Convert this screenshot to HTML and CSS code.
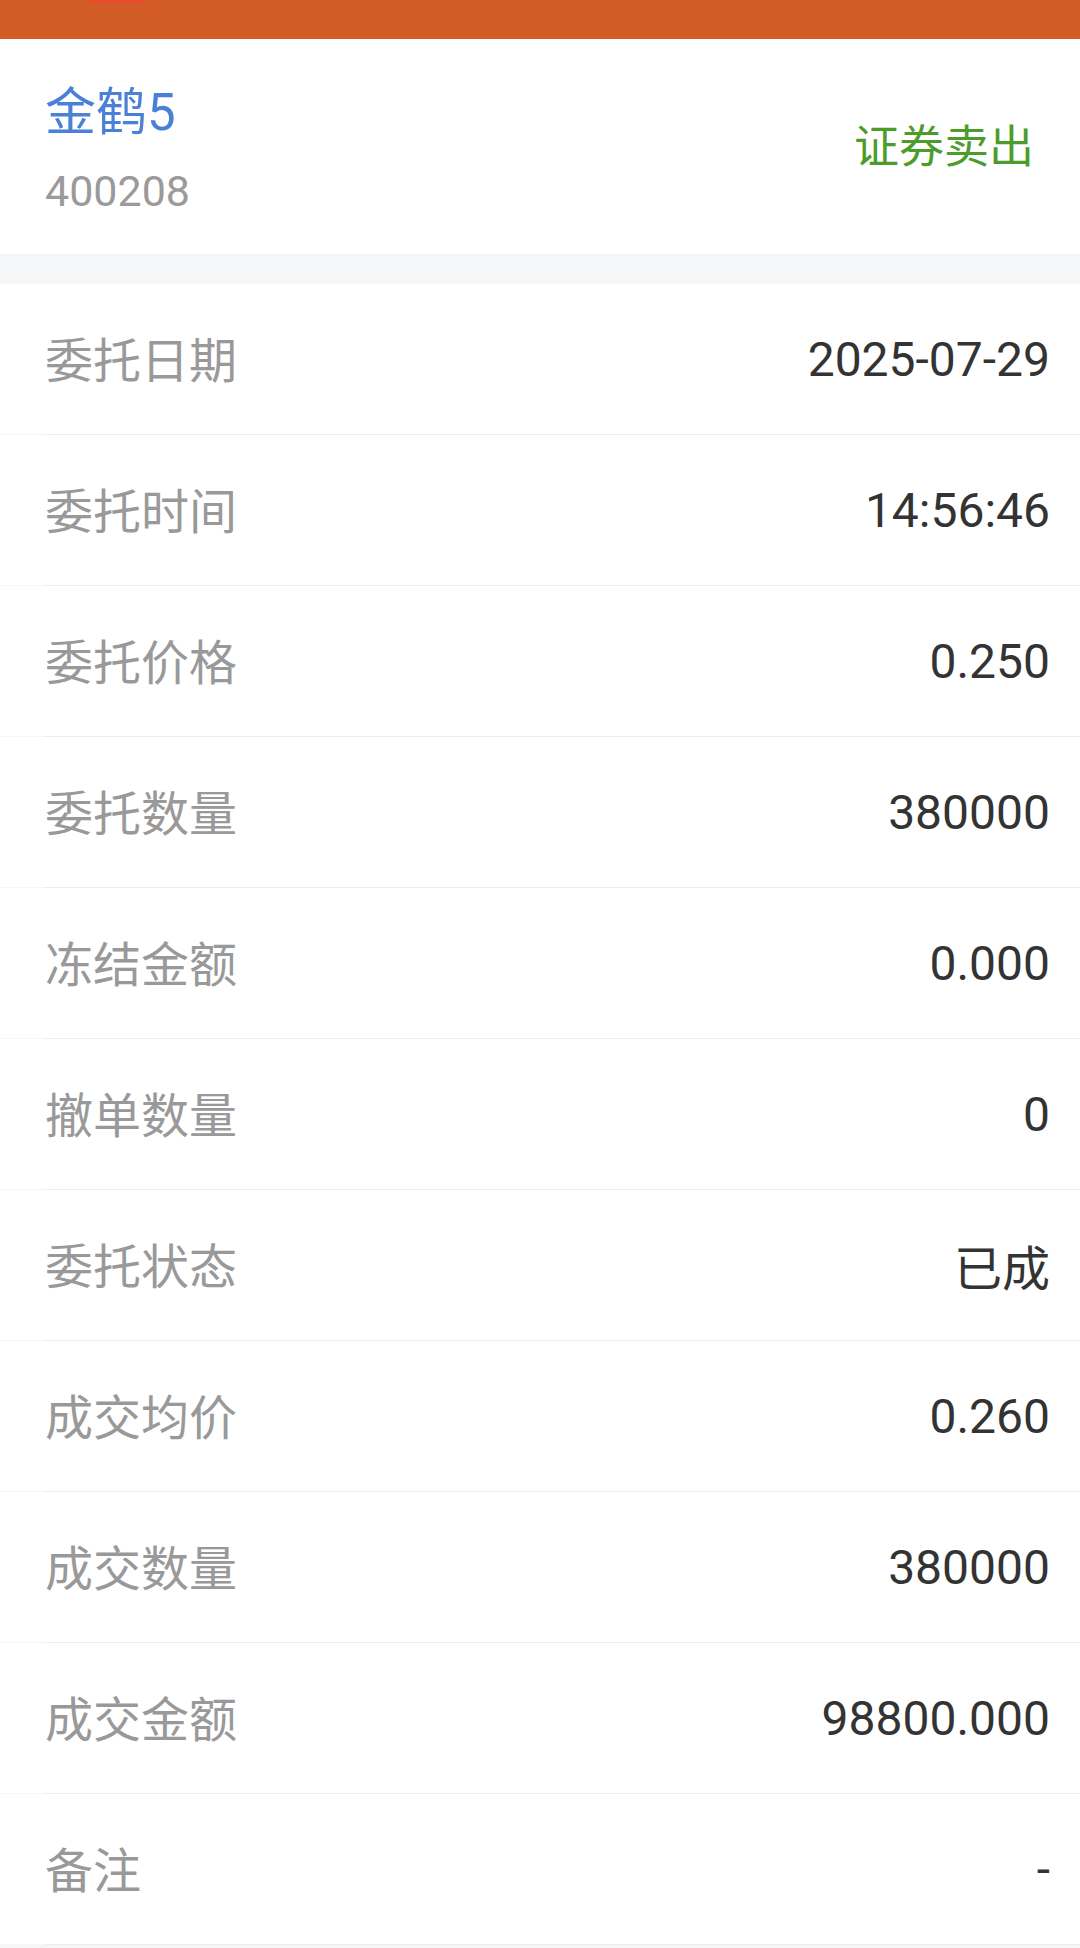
FILE: index.html
```html
<!DOCTYPE html>
<html lang="zh-CN">
<head>
<meta charset="utf-8">
<title>委托详情</title>
<link rel="stylesheet" href="styles.css">
</head>
<body>
<div class="topbar"><span class="topbar-pill"></span></div>
<header class="stock">
  <div class="stock-info">
    <div class="stock-name">金鹤5</div>
    <div class="stock-code">400208</div>
  </div>
  <div class="stock-action">证券卖出</div>
</header>
<div class="gap"></div>
<ul class="detail-list">
  <li class="detail-row"><span class="label">委托日期</span><span class="value">2025-07-29</span></li>
  <li class="detail-row"><span class="label">委托时间</span><span class="value">14:56:46</span></li>
  <li class="detail-row"><span class="label">委托价格</span><span class="value">0.250</span></li>
  <li class="detail-row"><span class="label">委托数量</span><span class="value">380000</span></li>
  <li class="detail-row"><span class="label">冻结金额</span><span class="value">0.000</span></li>
  <li class="detail-row"><span class="label">撤单数量</span><span class="value">0</span></li>
  <li class="detail-row"><span class="label">委托状态</span><span class="value">已成</span></li>
  <li class="detail-row"><span class="label">成交均价</span><span class="value">0.260</span></li>
  <li class="detail-row"><span class="label">成交数量</span><span class="value">380000</span></li>
  <li class="detail-row"><span class="label">成交金额</span><span class="value">98800.000</span></li>
  <li class="detail-row"><span class="label">备注</span><span class="value">-</span></li>
</ul>
</body>
</html>
```

FILE: styles.css
```css
html, body {
  margin: 0;
  padding: 0;
}
body {
  background: #f5f6f8;
  font-family: Roboto, "Noto Sans CJK SC", sans-serif;
  width: 1080px;
  min-height: 1948px;
}
.topbar {
  height: 39px;
  background: #d35c26;
  display: flex;
  align-items: flex-start;
}
.topbar-pill {
  display: block;
  margin-left: 88px;
  width: 58px;
  height: 3px;
  background: #e84a2a;
  border-radius: 0 0 3px 3px;
}
.stock {
  height: 215px;
  background: #ffffff;
  display: flex;
  align-items: center;
  justify-content: space-between;
  padding: 0 46px 0 45px;
  box-sizing: border-box;
}
.stock-info {
  display: flex;
  flex-direction: column;
  margin-top: 4px;
}
.stock-name {
  font-size: 51px;
  line-height: 62px;
  color: #4a80d6;
}
.stock-code {
  margin-top: 22px;
  font-size: 43px;
  line-height: 50px;
  color: #9a9a9a;
}
.stock-action {
  font-size: 45px;
  line-height: 56px;
  color: #4b9c2a;
  margin-top: 2px;
}
.gap {
  height: 30px;
  background: #f5f6f8;
}
.detail-list {
  list-style: none;
  margin: 0;
  padding: 0;
  background: #ffffff;
}
.detail-row {
  position: relative;
  height: 150px;
  display: flex;
  align-items: center;
  justify-content: space-between;
  padding: 0 30px 0 45px;
  box-sizing: border-box;
  margin-bottom: 1px;
}
.detail-row::after {
  content: "";
  position: absolute;
  left: 0;
  right: 0;
  bottom: -1px;
  height: 1px;
  background: linear-gradient(to right, #f6f6f6 0, #f6f6f6 45px, #ececec 45px, #ececec 100%);
}
.label {
  font-size: 48px;
  color: #999999;
  padding-bottom: 5px;
}
.value {
  font-size: 48px;
  color: #333333;
}
```
